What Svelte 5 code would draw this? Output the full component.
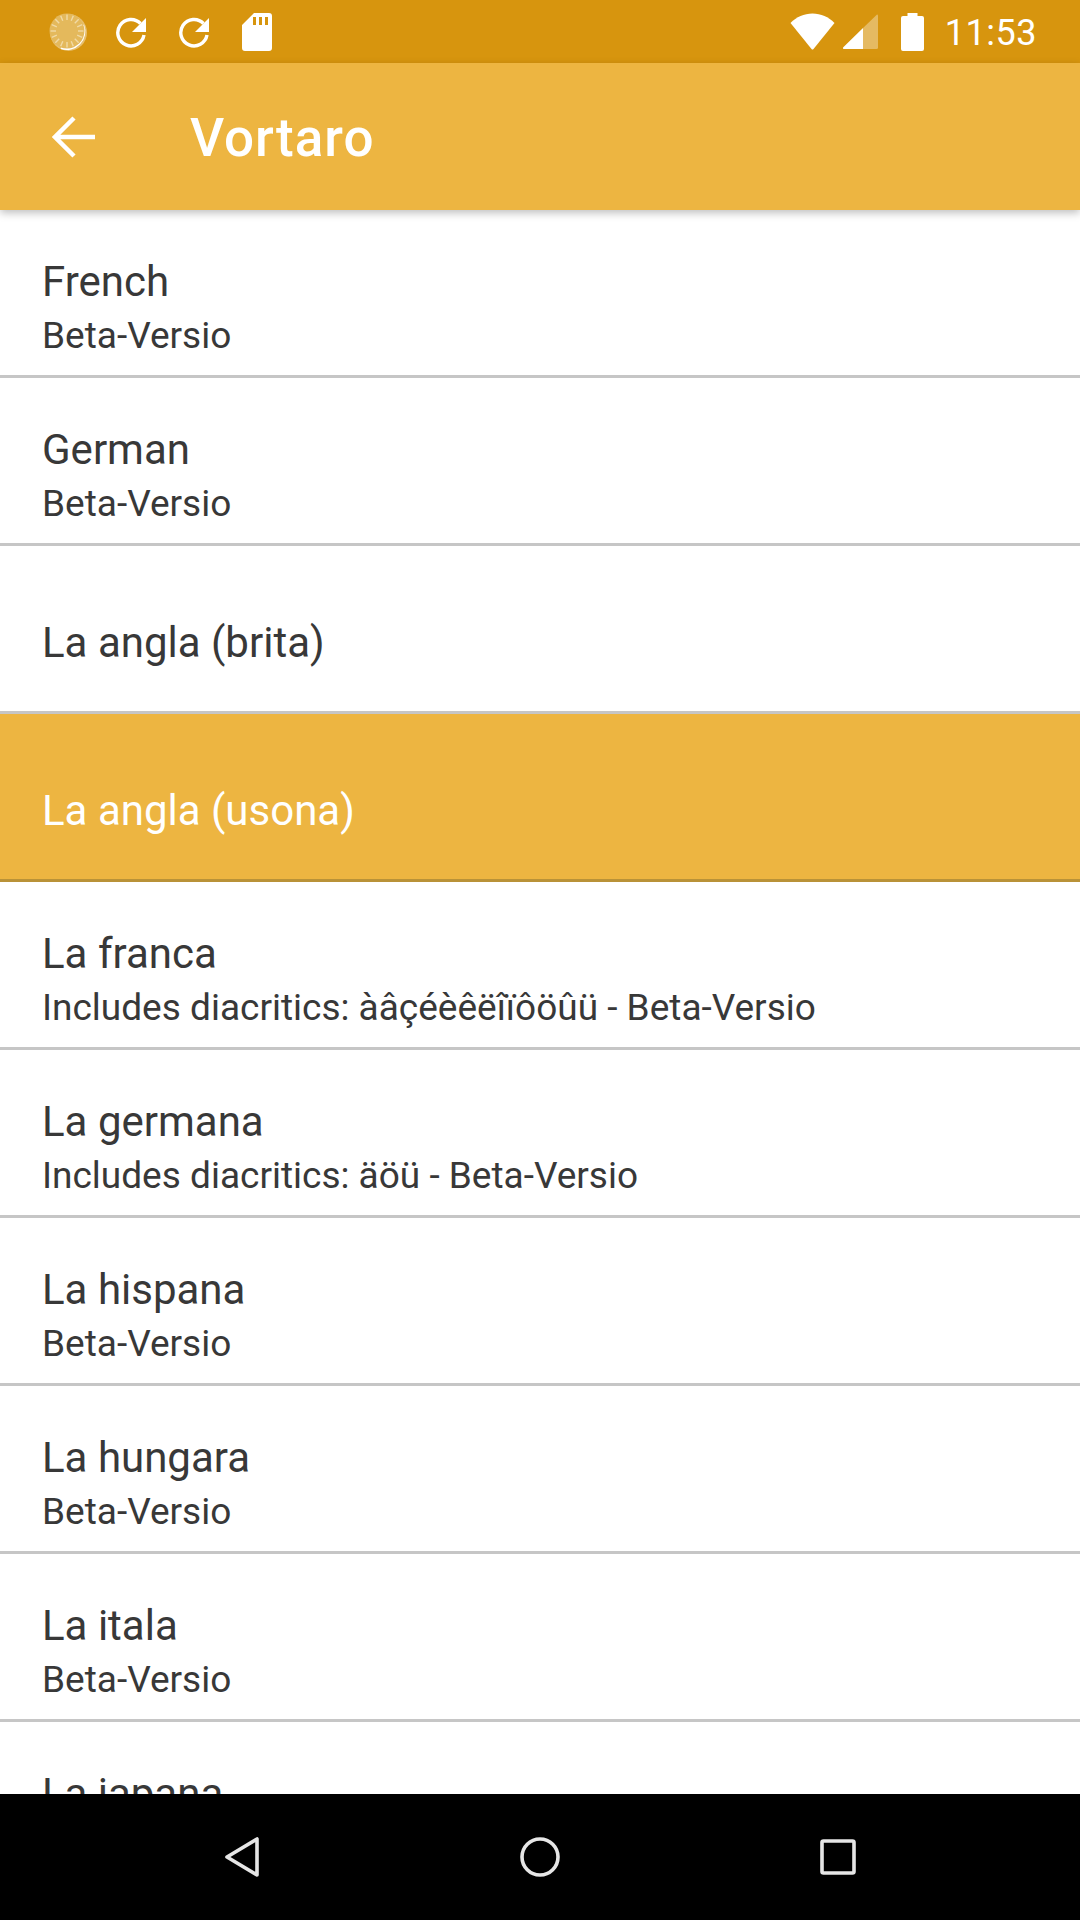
<script>
  const items = [
    { title: 'French', sub: 'Beta-Versio' },
    { title: 'German', sub: 'Beta-Versio' },
    { title: 'La angla (brita)' },
    { title: 'La angla (usona)', selected: true },
    { title: 'La franca', sub: 'Includes diacritics: àâçéèêëîïôöûü - Beta-Versio' },
    { title: 'La germana', sub: 'Includes diacritics: äöü - Beta-Versio' },
    { title: 'La hispana', sub: 'Beta-Versio' },
    { title: 'La hungara', sub: 'Beta-Versio' },
    { title: 'La itala', sub: 'Beta-Versio' },
    { title: 'La japana', sub: 'Beta-Versio' }
  ];
  const ticks = Array.from({ length: 16 }, (_, i) => i * 22.5);
</script>

<div class="screen">
  <div class="statusbar">
    <div class="status-left">
      <svg class="spinner" width="38" height="38" viewBox="0 0 38 38">
        <circle cx="19.500" cy="19.500" r="18.500" fill="#fff" opacity="0.4" />
        <path d="M34 12A17.500 17.500 0 0 1 12 35" fill="none" stroke="#fff" stroke-width="2.200" />
        <circle cx="18" cy="18" r="17.500" fill="#e4b95c" />
        {#each ticks as t}
          <rect x="17.300" y="1.500" width="1.400" height="5.500" fill="#f3dfb2" opacity="0.85" transform="rotate({t} 18 18)" />
        {/each}
      </svg>
      <svg width="30" height="32" viewBox="0 0 30 32">
        <path d="M24.500 7.500A13.200 13.200 0 1 0 28 19" fill="none" stroke="#fff" stroke-width="3.400" />
        <path d="M30 2v14H16z" fill="#fff" />
      </svg>
      <svg width="30" height="32" viewBox="0 0 30 32">
        <path d="M24.500 7.500A13.200 13.200 0 1 0 28 19" fill="none" stroke="#fff" stroke-width="3.400" />
        <path d="M30 2v14H16z" fill="#fff" />
      </svg>
      <svg width="30" height="38" viewBox="0 0 30 38">
        <path fill-rule="evenodd" fill="#fff" d="M12 0h15a3 3 0 0 1 3 3v32a3 3 0 0 1-3 3H3a3 3 0 0 1-3-3V12zM11 4v8h3V4zM17 4v8h3V4zM23 4v8h3V4z" />
      </svg>
    </div>
    <div class="status-right">
      <svg width="45" height="37" viewBox="0 0 45 37">
        <path d="M.500 10C6.500 4 14 .500 22.500.500S38.500 4 44.500 10L23.500 36a1.300 1.300 0 0 1-2 0z" fill="#fff" />
      </svg>
      <svg width="35" height="35" viewBox="0 0 35 35">
        <path d="M34 .500a1 1 0 0 1 1 1V33.500a1.500 1.500 0 0 1-1.500 1.500H20V14z" fill="#fff" opacity="0.35" />
        <path d="M20 14v21H1a1 1 0 0 1-.7-1.700z" fill="#fff" />
      </svg>
      <svg class="battery" width="23" height="38" viewBox="0 0 23 38">
        <path d="M6.500 0h10v3H21a2 2 0 0 1 2 2v31a2 2 0 0 1-2 2H2a2 2 0 0 1-2-2V5a2 2 0 0 1 2-2h4.500z" fill="#fff" />
      </svg>
      <span class="clock">11:53</span>
    </div>
  </div>

  <header class="toolbar">
    <svg width="44" height="42" viewBox="0 0 44 42">
      <path d="M43 21H4M22 2L3 21l19 19" fill="none" stroke="#fff" stroke-width="4.500" />
    </svg>
    <h1>Vortaro</h1>
  </header>

  <main class="list">
    {#each items as item}
      <div class="row" class:selected={item.selected} class:single={!item.sub}>
        <div class="title">{item.title}</div>
        {#if item.sub}
          <div class="sub">{item.sub}</div>
        {/if}
      </div>
    {/each}
  </main>

  <nav class="navbar">
    <div class="nav-cell">
      <svg width="34" height="40" viewBox="0 0 34 40">
        <path d="M32 2v36L2 20z" fill="none" stroke="#e6e6e6" stroke-width="3.600" stroke-linejoin="round" />
      </svg>
    </div>
    <div class="nav-cell">
      <svg width="40" height="40" viewBox="0 0 40 40">
        <circle cx="20" cy="20" r="18" fill="none" stroke="#e6e6e6" stroke-width="3.600" />
      </svg>
    </div>
    <div class="nav-cell">
      <svg width="36" height="36" viewBox="0 0 36 36">
        <rect x="2" y="2" width="32" height="32" rx="1.500" fill="none" stroke="#e6e6e6" stroke-width="3.600" />
      </svg>
    </div>
  </nav>
</div>

<style>
  :global(body) {
    margin: 0;
    background: #fff;
  }

  .screen {
    width: 1080px;
    height: 1920px;
    display: flex;
    flex-direction: column;
    overflow: hidden;
    font-family: Roboto, sans-serif;
    background: #fff;
  }

  .statusbar {
    height: 63px;
    flex-shrink: 0;
    background: #d7950e;
    display: flex;
    align-items: center;
    justify-content: space-between;
    padding: 0 43px 0 49px;
  }

  .status-left {
    display: flex;
    align-items: center;
    gap: 33px;
  }

  .spinner { margin-right: -4px; }

  .status-right {
    display: flex;
    align-items: center;
    gap: 8px;
  }

  .battery { margin-left: 15px; }

  .clock {
    color: #fff;
    font-size: 36px;
    margin-left: 13px;
    padding-top: 2px;
    letter-spacing: 0.5px;
  }

  .toolbar {
    height: 147px;
    flex-shrink: 0;
    background: #edb541;
    display: flex;
    align-items: center;
    padding: 0 0 0 52px;
    position: relative;
    z-index: 1;
    box-shadow: 0 3px 8px rgba(0, 0, 0, 0.25);
  }

  h1 {
    margin: 0 0 0 94px;
    padding-top: 2px;
    color: #fff;
    font-size: 53px;
    font-weight: 500;
    letter-spacing: 1px;
  }

  .list {
    flex: 1;
    min-height: 0;
    overflow: hidden;
  }

  .row {
    height: 168px;
    box-sizing: border-box;
    padding: 47px 42px 0;
    border-bottom: 3px solid #c6c6c6;
    color: #383838;
  }

  .row.single { padding-top: 72px; }

  .row.selected {
    background: #edb541;
    color: #fff;
    border-bottom-color: #b99238;
  }

  .title {
    font-size: 42px;
    line-height: 50px;
  }

  .sub {
    font-size: 37px;
    line-height: 42px;
    margin-top: 8px;
  }

  .navbar {
    height: 126px;
    flex-shrink: 0;
    background: #000;
    display: flex;
    align-items: center;
    justify-content: center;
  }

  .nav-cell {
    width: 298px;
    display: flex;
    justify-content: center;
  }
</style>
